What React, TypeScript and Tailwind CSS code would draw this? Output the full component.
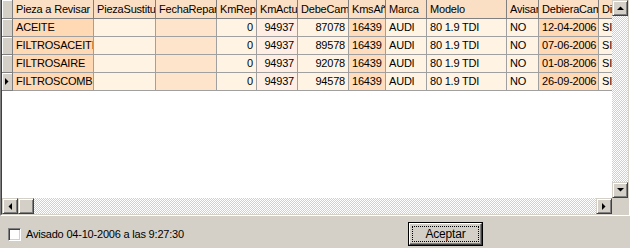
const cols = [
  { title: "Pieza a Revisar", w: "w-[81px]", bg: "bg-[#ffd8b4]", right: false },
  { title: "PiezaSustituida", w: "w-[62px]", bg: "bg-[#fff4e4]", right: false },
  { title: "FechaReparacion", w: "w-[61px]", bg: "bg-[#ffe4cc]", right: false },
  { title: "KmReparacion", w: "w-[40px]", bg: "bg-[#fff4e4]", right: true },
  { title: "KmActuales", w: "w-[41px]", bg: "bg-[#ffeee4]", right: true },
  { title: "DebeCambiarKm", w: "w-[51px]", bg: "bg-[#fff4e4]", right: true },
  { title: "KmsAño", w: "w-[37px]", bg: "bg-[#ffdcbc]", right: false },
  { title: "Marca", w: "w-[41px]", bg: "bg-[#fff4e4]", right: false },
  { title: "Modelo", w: "w-[80px]", bg: "bg-[#fff4e4]", right: false },
  { title: "Avisar", w: "w-[32px]", bg: "bg-[#fff4e4]", right: false },
  { title: "DebieraCambiarse", w: "w-[60px]", bg: "bg-[#ffd8b4]", right: false },
  { title: "Dias", w: "w-[40px]", bg: "bg-[#fff4e4]", right: false },
];

const rows = [
  ["ACEITE", "", "", "0", "94937", "87078", "16439", "AUDI", "80 1.9 TDI", "NO", "12-04-2006", "SI"],
  ["FILTROSACEITE", "", "", "0", "94937", "89578", "16439", "AUDI", "80 1.9 TDI", "NO", "07-06-2006", "SI"],
  ["FILTROSAIRE", "", "", "0", "94937", "92078", "16439", "AUDI", "80 1.9 TDI", "NO", "01-08-2006", "SI"],
  ["FILTROSCOMBUSTIBLE", "", "", "0", "94937", "94578", "16439", "AUDI", "80 1.9 TDI", "NO", "26-09-2006", "SI"],
];

const raised =
  "bg-[#d4d0c8] border border-t-[#d4d0c8] border-l-[#d4d0c8] border-r-[#404040] border-b-[#404040] shadow-[inset_1px_1px_#fff,inset_-1px_-1px_#808080]";

function Arrow({ dir }: { dir: "up" | "down" | "left" | "right" }) {
  const pts = {
    up: "0,4 7,4 3.5,0.5",
    down: "0,0 7,0 3.5,3.5",
    left: "4,0 4,7 0.5,3.5",
    right: "0,0 0,7 3.5,3.5",
  }[dir];
  const vert = dir === "up" || dir === "down";
  return (
    <svg width={vert ? 7 : 4} height={vert ? 4 : 7} viewBox={vert ? "0 0 7 4" : "0 0 4 7"}>
      <polygon points={pts} fill="#000" />
    </svg>
  );
}

export default function App() {
  return (
    <div className="w-[630px] h-[248px] overflow-hidden bg-[#d4d0c8] font-['Liberation_Sans',Arial,sans-serif] text-[11px] tracking-[-0.2px] text-black">
      {/* grid with sunken frame */}
      <div className="h-[216px] border-l border-r border-b border-l-[#808080] border-r-white border-b-white">
        <div className="h-full border-l border-r border-b border-l-[#404040] border-r-[#d4d0c8] border-b-[#d4d0c8] flex flex-col">
          <div className="flex h-[198px]">
            <div className="w-[610px] bg-white overflow-hidden">
              <div className="flex h-[19px]">
                <div className="w-[11px] shrink-0 bg-[#d4d0c8] border-r border-b border-[#808080] shadow-[inset_1px_1px_#fff]" />
                {cols.map((c) => (
                  <div
                    key={c.title}
                    className={`${c.w} shrink-0 bg-[#fbdfc4] border-r border-b border-[#808080] pl-[3px] flex items-center overflow-hidden whitespace-nowrap`}
                  >
                    {c.title}
                  </div>
                ))}
              </div>
              {rows.map((r, i) => (
                <div key={i} className="flex h-[18px]">
                  <div className="w-[11px] shrink-0 bg-[#d4d0c8] border-r border-b border-[#808080] shadow-[inset_1px_1px_#fff] flex items-center justify-center">
                    {i === 3 && <Arrow dir="right" />}
                  </div>
                  {cols.map((c, j) => (
                    <div
                      key={j}
                      className={`${c.w} ${c.bg} shrink-0 border-r border-b border-[#a0a0a0] flex items-center overflow-hidden whitespace-nowrap ${
                        c.right ? "justify-end pr-[3px]" : "pl-[3px]"
                      }`}
                    >
                      {r[j]}
                    </div>
                  ))}
                </div>
              ))}
            </div>
            {/* vertical scrollbar */}
            <div className="w-[16px] flex flex-col">
              <div className={`${raised} h-[16px] flex items-center justify-center`}>
                <Arrow dir="up" />
              </div>
              <div className="flex-1 bg-[repeating-conic-gradient(#d4d0c8_0_25%,#fff_0_50%)] bg-[length:2px_2px]" />
              <div className={`${raised} h-[16px] flex items-center justify-center`}>
                <Arrow dir="down" />
              </div>
            </div>
          </div>
          {/* horizontal scrollbar */}
          <div className="flex h-[16px]">
            <div className={`${raised} w-[16px] flex items-center justify-center`}>
              <Arrow dir="left" />
            </div>
            <div className={`${raised} w-[16px]`} />
            <div className="flex-1 bg-[repeating-conic-gradient(#d4d0c8_0_25%,#fff_0_50%)] bg-[length:2px_2px]" />
            <div className={`${raised} w-[16px] flex items-center justify-center`}>
              <Arrow dir="right" />
            </div>
            <div className="w-[16px] bg-[#d4d0c8]" />
          </div>
        </div>
      </div>

      {/* bottom panel */}
      <div className="flex items-start h-[32px] pl-[8px]">
        <label className="flex items-center gap-[5px] w-[400px] pt-[10px]">
          <span className="w-[13px] h-[13px] bg-white border border-t-[#808080] border-l-[#808080] border-r-white border-b-white shadow-[inset_1px_1px_#404040,inset_-1px_-1px_#d4d0c8]" />
          <span>Avisado 04-10-2006 a las 9:27:30</span>
        </label>
        <button className="mt-[6px] w-[75px] h-[24px] border border-black bg-[#d4d0c8] p-0">
          <div className="w-full h-full border border-t-white border-l-white border-r-[#404040] border-b-[#404040] shadow-[inset_-1px_-1px_#808080] p-[2px]">
            <div className="w-full h-full border border-dotted border-black flex items-center justify-center text-[12px]">
              Aceptar
            </div>
          </div>
        </button>
      </div>
    </div>
  );
}
